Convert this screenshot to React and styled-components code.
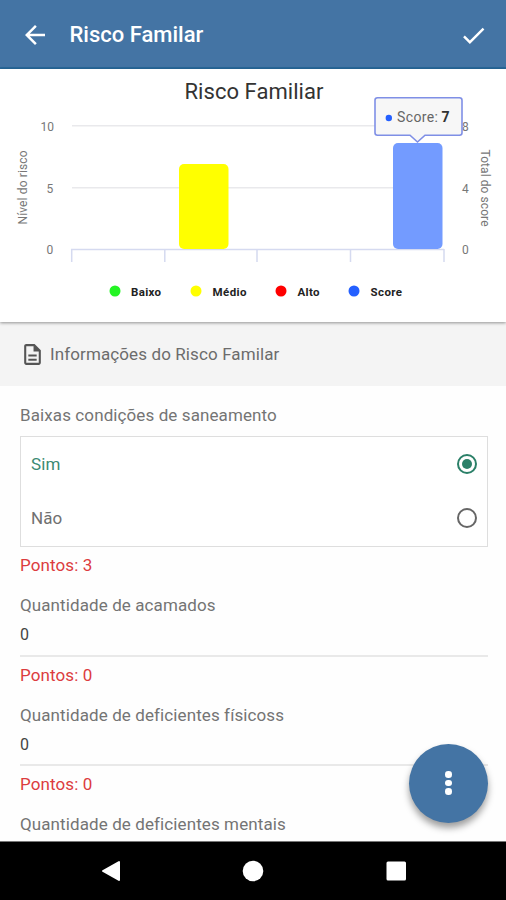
import styled, { createGlobalStyle } from "styled-components";
import { MdArrowBack, MdCheck, MdOutlineDescription } from "react-icons/md";
import { useState } from "react";

const GlobalStyle = createGlobalStyle`
  * {
    box-sizing: border-box;
  }

  body {
    margin: 0;
    font-family: Roboto, "Liberation Sans", sans-serif;
    background-color: #fefefe;
  }

  button {
    border: none;
    background: none;
    padding: 0;
    cursor: pointer;
  }
`;

const Layout = styled.div`
  position: relative;
  width: 506px;
  height: 900px;
  display: flex;
  flex-direction: column;
  overflow: hidden;
`;

const Header = styled.header`
  flex: none;
  height: 69px;
  padding: 0 18px 0 20px;
  display: flex;
  align-items: center;
  background-color: #4474a4;
  border-bottom: 2px solid #28689a;
  color: #fff;

  h1 {
    flex: 1;
    margin: 2px 0 0 19.5px;
    font-size: 22px;
    font-weight: 500;
    line-height: 26px;
  }

  button {
    display: flex;
    margin-top: 3px;
    color: inherit;
  }
`;

const ChartCard = styled.section`
  position: relative;
  flex: none;
  height: 253px;
  background-color: #fff;
  box-shadow: 0 1px 3px rgba(0, 0, 0, 0.4);
  z-index: 1;

  svg {
    display: block;
  }
`;

const SectionTitle = styled.div`
  flex: none;
  height: 64px;
  padding: 0 20px 0;
  display: flex;
  align-items: center;
  gap: 5px;
  background-color: #f4f4f4;
  color: #6c6c6c;
  font-size: 17px;
  letter-spacing: 0.11px;

  span {
    margin-top: -1px;
  }

  svg {
    color: #555;
  }
`;

const Form = styled.main`
  flex: 1;
  min-height: 0;
  overflow: hidden;
  padding: 17px 18px 0 20px;
`;

const Label = styled.div`
  height: 24px;
  line-height: 24px;
  font-size: 17px;
  letter-spacing: 0.1px;
  color: #747474;
`;

const Options = styled.div`
  height: 111px;
  margin-top: 9px;
  border: 1.5px solid #dedede;
  background-color: #fff;
`;

const Option = styled.div`
  height: 54px;
  padding: 0 10px;
  display: flex;
  align-items: center;
  justify-content: space-between;
  font-size: 17px;
  letter-spacing: 0.1px;
  color: ${({ $checked }) => ($checked ? "#3b8a73" : "#707070")};
  cursor: pointer;
`;

const Radio = styled.span`
  width: 20px;
  height: 20px;
  display: flex;
  align-items: center;
  justify-content: center;
  border: 2px solid ${({ $checked }) => ($checked ? "#2b8068" : "#666")};
  border-radius: 50%;

  &::after {
    content: "";
    width: 10px;
    height: 10px;
    border-radius: 50%;
    background-color: ${({ $checked }) => ($checked ? "#2b8068" : "transparent")};
  }
`;

const Points = styled.div`
  height: 38px;
  line-height: 37px;
  font-size: 17px;
  letter-spacing: 0.1px;
  color: #dc3c3e;
`;

const Field = styled.div`
  height: 71.5px;
  padding-top: 8px;
  border-bottom: ${({ $last }) => ($last ? "none" : "2px solid #e9e9e9")};

  .value {
    height: 34px;
    line-height: 35px;
    font-size: 16px;
    color: #444;
  }
`;

const Fab = styled.button`
  position: absolute;
  right: 18px;
  bottom: 77.5px;
  width: 79px;
  height: 79px;
  display: flex;
  flex-direction: column;
  align-items: center;
  justify-content: center;
  gap: 2px;
  border-radius: 50%;
  background-color: #4474a4;
  box-shadow: 0 5px 7px rgba(0, 0, 0, 0.38);

  span {
    width: 6.5px;
    height: 6.5px;
    border-radius: 50%;
    background-color: #fff;
  }
`;

const NavBar = styled.nav`
  flex: none;
  height: 59px;
  padding: 0 99.5px 0 101px;
  display: flex;
  align-items: center;
  justify-content: space-between;
  background-color: #000;
  border-top: 1px solid #777;

  svg {
    display: block;
  }
`;

const legend = [
  { name: "Baixo", color: "#24f424", dot: 115, x: 131, width: 30 },
  { name: "Médio", color: "#ffff00", dot: 196, x: 212.5, width: 34 },
  { name: "Alto", color: "#ff0000", dot: 281, x: 297.5, width: 22 },
  { name: "Score", color: "#2460ff", dot: 354, x: 370.5, width: 31.5 },
];

const fields = [
  { label: "Quantidade de acamados", value: "0", points: 0 },
  { label: "Quantidade de deficientes físicoss", value: "0", points: 0 },
  { label: "Quantidade de deficientes mentais", value: "", points: 0 },
];

function RiskChart() {
  return (
    <svg width="506" height="253" viewBox="0 69 506 253" fill="none">
      <text x="184.5" y="99" fontSize="22" fill="#333" textLength="139">
        Risco Familiar
      </text>
      <path d="M72 125.8H442M72 187.8H442" stroke="#e9e9ec" strokeWidth="1.6" />
      <path
        d="M71 249.5H444M71.7 249V262M164.8 249V262M257 249V262M350.5 249V262M444 249V262"
        stroke="#d5daf0"
        strokeWidth="1.5"
      />
      <rect x="179" y="164" width="49.5" height="85" rx="5" fill="#ffff00" />
      <rect x="393" y="143" width="49.5" height="106" rx="5" fill="#739bff" />
      <g fontSize="12" fill="#777">
        <text x="40.5" y="131" textLength="13.5">10</text>
        <text x="46.5" y="192.5">5</text>
        <text x="46.5" y="254">0</text>
        <text x="462" y="131">8</text>
        <text x="462" y="192.5">4</text>
        <text x="462" y="254">0</text>
        <text transform="translate(27 224.5) rotate(-90)" textLength="74">
          Nível do risco
        </text>
        <text transform="translate(481 149.5) rotate(90)" textLength="77">
          Total do score
        </text>
      </g>
      {legend.map((item) => (
        <g key={item.name}>
          <circle cx={item.dot} cy="291" r="5.5" fill={item.color} />
          <text
            x={item.x}
            y="295.5"
            fontSize="11.5"
            fontWeight="700"
            fill="#222"
            textLength={item.width}
          >
            {item.name}
          </text>
        </g>
      ))}
      {/* tooltip */}
      <path
        d="M377.5 97.8H459.5Q462 97.8 462 100.3V132.7Q462 135.2 459.5 135.2H425L417.5 142L410 135.2H377.5Q375 135.2 375 132.7V100.3Q375 97.8 377.5 97.8Z"
        fill="#f7f7f7"
        stroke="#7f8fe6"
        strokeWidth="1.6"
      />
      <circle cx="388.8" cy="118" r="3.2" fill="#2460ff" />
      <text x="397" y="122" fontSize="14" fill="#666" textLength="41">
        Score:
      </text>
      <text x="441.5" y="122" fontSize="14" fontWeight="700" fill="#333">
        7
      </text>
    </svg>
  );
}

function App() {
  const [answer, setAnswer] = useState("Sim");

  return (
    <>
      <GlobalStyle />
      <Layout>
        <Header>
          <button>
            <MdArrowBack size={30} />
          </button>
          <h1>Risco Familar</h1>
          <button>
            <MdCheck size={29} />
          </button>
        </Header>
        <ChartCard>
          <RiskChart />
        </ChartCard>
        <SectionTitle>
          <MdOutlineDescription size={25} />
          <span>Informações do Risco Familar</span>
        </SectionTitle>
        <Form>
          <Label>Baixas condições de saneamento</Label>
          <Options>
            {["Sim", "Não"].map((text) => (
              <Option
                key={text}
                $checked={answer === text}
                onClick={() => setAnswer(text)}
              >
                {text}
                <Radio $checked={answer === text} />
              </Option>
            ))}
          </Options>
          <Points>Pontos: {answer === "Sim" ? 3 : 0}</Points>
          {fields.map((field, i) => (
            <div key={field.label}>
              <Field $last={i === fields.length - 1}>
                <Label>{field.label}</Label>
                <div className="value">{field.value}</div>
              </Field>
              {i < fields.length - 1 && <Points>Pontos: {field.points}</Points>}
            </div>
          ))}
        </Form>
        <NavBar>
          <svg width="20" height="22" viewBox="0 0 20 22">
            <path
              d="M2 11L18 2V20Z"
              fill="#fff"
              stroke="#fff"
              strokeWidth="2"
              strokeLinejoin="round"
            />
          </svg>
          <svg width="22" height="22" viewBox="0 0 22 22">
            <circle cx="11" cy="11" r="10.3" fill="#fff" />
          </svg>
          <svg width="21" height="20" viewBox="0 0 21 20">
            <rect x="0.5" y="0.5" width="19.5" height="19" rx="1.5" fill="#fff" />
          </svg>
        </NavBar>
        <Fab>
          <span />
          <span />
          <span />
        </Fab>
      </Layout>
    </>
  );
}

export default App;
